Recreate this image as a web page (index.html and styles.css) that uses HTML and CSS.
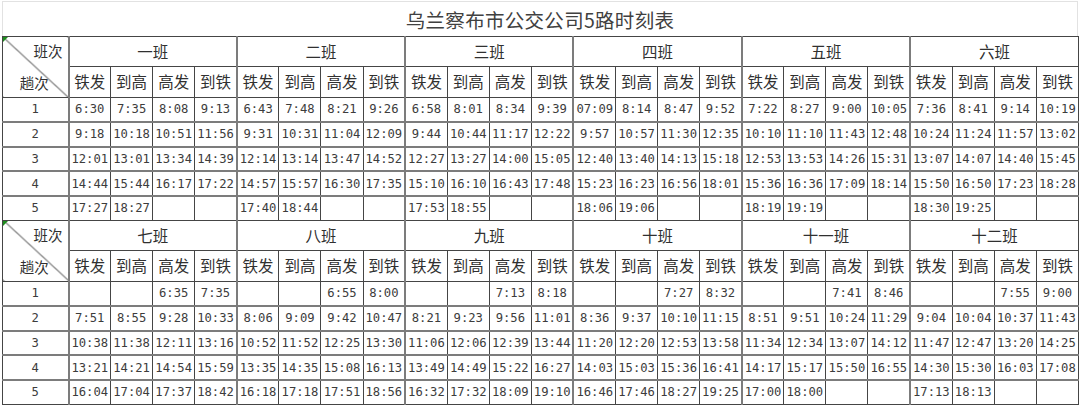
FILE: index.html
```html
<!DOCTYPE html>
<html lang="zh-CN">
<head>
<meta charset="utf-8">
<title>乌兰察布市公交公司5路时刻表</title>
<link rel="stylesheet" href="styles.css">
</head>
<body>
<div class="sheet">
  <div class="title">乌兰察布市公交公司5路时刻表</div>
  <table class="tt" id="tt">
    <colgroup><col class="c-idx"></colgroup>
    <tbody id="body"></tbody>
  </table>
</div>
<script src="app.js"></script>
</body>
</html>
```

FILE: styles.css
```css
html, body {
  margin: 0;
  padding: 0;
  background: #ffffff;
}
.sheet {
  width: 1080px;
  height: 405px;
  overflow: hidden;
  padding-left: 2px;
  box-sizing: border-box;
}
.title {
  width: 1076px;
  height: 35px;
  margin-top: 1px;
  box-sizing: border-box;
  border-top: 1px solid #e2e2e2;
  border-left: 1px solid #e2e2e2;
  border-right: 1px solid #e2e2e2;
  display: flex;
  align-items: center;
  justify-content: center;
  font-family: "Noto Sans CJK SC", sans-serif;
  font-size: 19.5px;
  color: #404040;
  letter-spacing: 0.3px;
}
.tt {
  width: 1077px;
  table-layout: fixed;
  border-collapse: collapse;
  font-family: "Noto Sans CJK SC", sans-serif;
  color: #303030;
}
.c-idx { width: 66px; }
.tt td {
  border: 1px solid #454545;
  padding: 0;
  text-align: center;
  vertical-align: middle;
  white-space: nowrap;
  overflow: hidden;
}
.tt td.g { border-left: 2px solid #7c7c7c; }
.tt tr.r1 td { height: 29px; font-size: 15.5px; line-height: 1; }
.tt tr.r2 td { height: 30px; font-size: 15.5px; line-height: 1; }
.tt tr.d td {
  height: 22.8px;
  font-family: "DejaVu Sans Mono", monospace;
  font-size: 12.2px;
  line-height: 1;
  color: #3c3c3c;
  border-top: 2px solid #7c7c7c;
}
.tt tr.d.first td { border-top: 1px solid #454545; }
.tt td.diag {
  position: relative;
  padding: 0;
  background: linear-gradient(to top right, transparent calc(50% - 0.8px), #404040 50%, transparent calc(50% + 0.8px));
}
.tt td.diag::before {
  content: "";
  position: absolute;
  left: 0;
  top: 0;
  border-top: 5px solid #1e8c1e;
  border-right: 5px solid transparent;
}
.diag-box {
  height: 60px;
  display: flex;
  flex-direction: column;
  font-size: 14.5px;
  line-height: 1;
}
.diag-top {
  flex: 1;
  display: flex;
  align-items: center;
  justify-content: flex-end;
  padding-right: 5px;
}
.diag-bot {
  flex: 1;
  display: flex;
  align-items: center;
  justify-content: center;
  padding-top: 4px;
  padding-right: 2px;
}
```

FILE: app.js
```js
(function () {
  var names = ["一班","二班","三班","四班","五班","六班","七班","八班","九班","十班","十一班","十二班"];
  var sub = ["铁发","到高","高发","到铁"];
  var data = [
    [["6:30","7:35","8:08","9:13"],["9:18","10:18","10:51","11:56"],["12:01","13:01","13:34","14:39"],["14:44","15:44","16:17","17:22"],["17:27","18:27","",""]],
    [["6:43","7:48","8:21","9:26"],["9:31","10:31","11:04","12:09"],["12:14","13:14","13:47","14:52"],["14:57","15:57","16:30","17:35"],["17:40","18:44","",""]],
    [["6:58","8:01","8:34","9:39"],["9:44","10:44","11:17","12:22"],["12:27","13:27","14:00","15:05"],["15:10","16:10","16:43","17:48"],["17:53","18:55","",""]],
    [["07:09","8:14","8:47","9:52"],["9:57","10:57","11:30","12:35"],["12:40","13:40","14:13","15:18"],["15:23","16:23","16:56","18:01"],["18:06","19:06","",""]],
    [["7:22","8:27","9:00","10:05"],["10:10","11:10","11:43","12:48"],["12:53","13:53","14:26","15:31"],["15:36","16:36","17:09","18:14"],["18:19","19:19","",""]],
    [["7:36","8:41","9:14","10:19"],["10:24","11:24","11:57","13:02"],["13:07","14:07","14:40","15:45"],["15:50","16:50","17:23","18:28"],["18:30","19:25","",""]],
    [["","","6:35","7:35"],["7:51","8:55","9:28","10:33"],["10:38","11:38","12:11","13:16"],["13:21","14:21","14:54","15:59"],["16:04","17:04","17:37","18:42"]],
    [["","","6:55","8:00"],["8:06","9:09","9:42","10:47"],["10:52","11:52","12:25","13:30"],["13:35","14:35","15:08","16:13"],["16:18","17:18","17:51","18:56"]],
    [["","","7:13","8:18"],["8:21","9:23","9:56","11:01"],["11:06","12:06","12:39","13:44"],["13:49","14:49","15:22","16:27"],["16:32","17:32","18:09","19:10"]],
    [["","","7:27","8:32"],["8:36","9:37","10:10","11:15"],["11:20","12:20","12:53","13:58"],["14:03","15:03","15:36","16:41"],["16:46","17:46","18:27","19:25"]],
    [["","","7:41","8:46"],["8:51","9:51","10:24","11:29"],["11:34","12:34","13:07","14:12"],["14:17","15:17","15:50","16:55"],["17:00","18:00","",""]],
    [["","","7:55","9:00"],["9:04","10:04","10:37","11:43"],["11:47","12:47","13:20","14:25"],["14:30","15:30","16:03","17:08"],["17:13","18:13","",""]]
  ];
  var body = document.getElementById("body");
  var h = "";
  for (var b = 0; b < 2; b++) {
    h += '<tr class="r1"><td class="diag" rowspan="2"><div class="diag-box"><span class="diag-top">班次</span><span class="diag-bot">趟次</span></div></td>';
    for (var g = 0; g < 6; g++) h += '<td class="g" colspan="4">' + names[b * 6 + g] + '</td>';
    h += '</tr><tr class="r2">';
    for (g = 0; g < 6; g++) for (var s = 0; s < 4; s++) h += '<td' + (s === 0 ? ' class="g"' : '') + '>' + sub[s] + '</td>';
    h += '</tr>';
    for (var r = 0; r < 5; r++) {
      h += '<tr class="d' + (r === 0 ? ' first' : '') + '"><td>' + (r + 1) + '</td>';
      for (g = 0; g < 6; g++) for (s = 0; s < 4; s++) h += '<td' + (s === 0 ? ' class="g"' : '') + '>' + data[b * 6 + g][r][s] + '</td>';
      h += '</tr>';
    }
  }
  body.innerHTML = h;
})();
```
